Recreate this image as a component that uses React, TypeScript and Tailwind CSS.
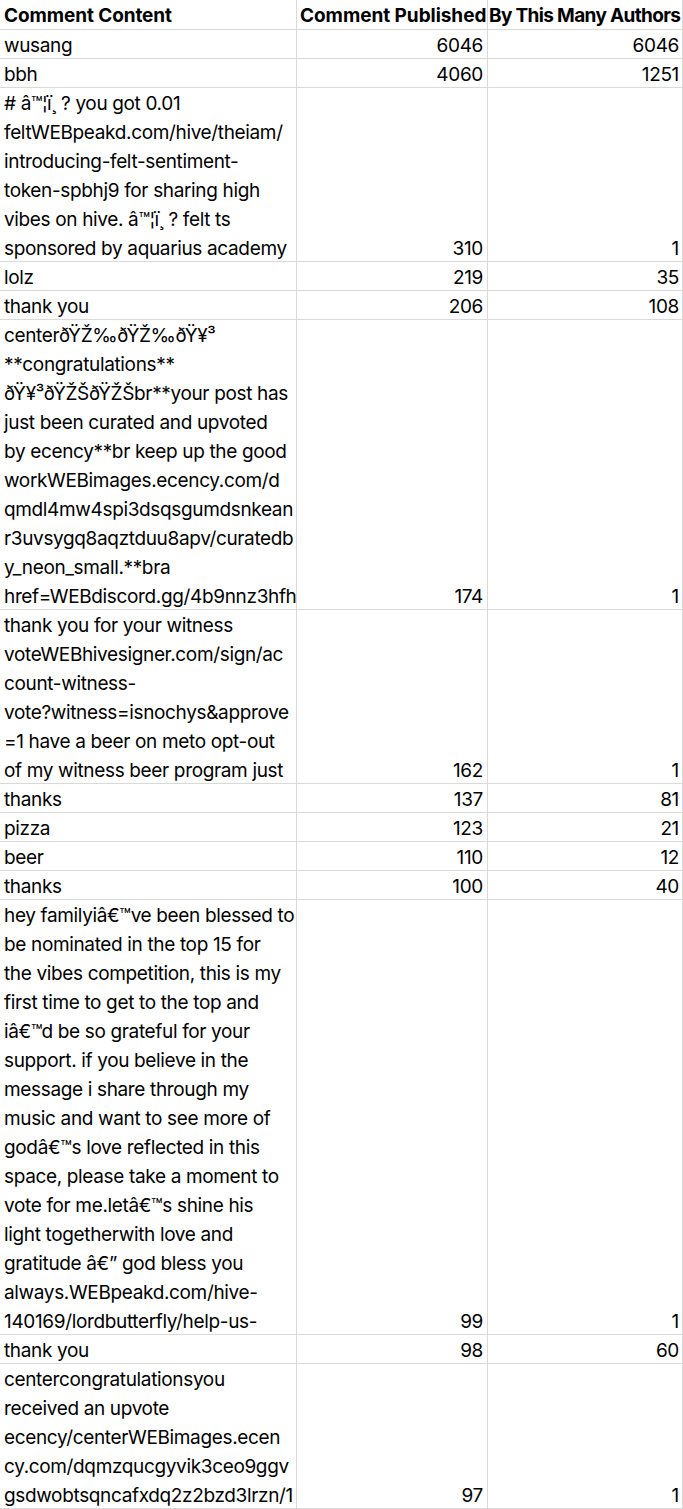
import React from "react";

type Row = { lines: string[]; a: string; b: string };

const rows: Row[] = [
  { lines: ["wusang"], a: "6046", b: "6046" },
  { lines: ["bbh"], a: "4060", b: "1251" },
  {
    lines: [
      "# â™¦ï¸ ? you got 0.01",
      "feltWEBpeakd.com/hive/theiam/",
      "introducing-felt-sentiment-",
      "token-spbhj9 for sharing high",
      "vibes on hive. â™¦ï¸ ? felt ts",
      "sponsored by aquarius academy",
    ],
    a: "310",
    b: "1",
  },
  { lines: ["lolz"], a: "219", b: "35" },
  { lines: ["thank you"], a: "206", b: "108" },
  {
    lines: [
      "centerðŸŽ‰ðŸŽ‰ðŸ¥³",
      "**congratulations**",
      "ðŸ¥³ðŸŽŠðŸŽŠbr**your post has",
      "just been curated and upvoted",
      "by ecency**br keep up the good",
      "workWEBimages.ecency.com/d",
      "qmdl4mw4spi3dsqsgumdsnkean",
      "r3uvsygq8aqztduu8apv/curatedb",
      "y_neon_small.**bra",
      "href=WEBdiscord.gg/4b9nnz3hfh",
    ],
    a: "174",
    b: "1",
  },
  {
    lines: [
      "thank you for your witness",
      "voteWEBhivesigner.com/sign/ac",
      "count-witness-",
      "vote?witness=isnochys&approve",
      "=1 have a beer on meto opt-out",
      "of my witness beer program just",
    ],
    a: "162",
    b: "1",
  },
  { lines: ["thanks"], a: "137", b: "81" },
  { lines: ["pizza"], a: "123", b: "21" },
  { lines: ["beer"], a: "110", b: "12" },
  { lines: ["thanks"], a: "100", b: "40" },
  {
    lines: [
      "hey familyiâ€™ve been blessed to",
      "be nominated in the top 15 for",
      "the vibes competition, this is my",
      "first time to get to the top and",
      "iâ€™d be so grateful for your",
      "support. if you believe in the",
      "message i share through my",
      "music and want to see more of",
      "godâ€™s love reflected in this",
      "space, please take a moment to",
      "vote for me.letâ€™s shine his",
      "light togetherwith love and",
      "gratitude â€” god bless you",
      "always.WEBpeakd.com/hive-",
      "140169/lordbutterfly/help-us-",
    ],
    a: "99",
    b: "1",
  },
  { lines: ["thank you"], a: "98", b: "60" },
  {
    lines: [
      "centercongratulationsyou",
      "received an upvote",
      "ecency/centerWEBimages.ecen",
      "cy.com/dqmzqucgyvik3ceo9ggv",
      "gsdwobtsqncafxdq2z2bzd3lrzn/1",
    ],
    a: "97",
    b: "1",
  },
];

const cell = "shadow-[inset_-1px_-1px_0_#d9d9d9]";

export default function App() {
  return (
    <div
      className="w-[683px] bg-white text-black text-[19px] leading-[29px] tracking-[-0.35px]"
      style={{ fontFamily: "Inter, 'Liberation Sans', sans-serif" }}
    >
      <div className="grid grid-cols-[297px_191px_195px]">
        <div className={`${cell} h-[30px] pt-px pl-[4px] font-bold tracking-[-0.1px] whitespace-nowrap`}>
          Comment Content
        </div>
        <div className={`${cell} h-[30px] pt-px pl-[3px] font-bold tracking-[-0.05px] whitespace-nowrap`}>
          Comment Published
        </div>
        <div className={`${cell} h-[30px] pt-px pl-[1px] font-bold tracking-[-0.65px] whitespace-nowrap`}>
          By This Many Authors
        </div>
        {rows.map((r, i) => (
          <React.Fragment key={i}>
            <div className={`${cell} pl-[4px]`}>
              {r.lines.map((l, j) => (
                <div key={j} className="h-[29px] pt-px whitespace-nowrap">
                  {l}
                </div>
              ))}
            </div>
            <div className={`${cell} flex items-end justify-end pr-[5px]`}>
              <div className="h-[29px] pt-px">{r.a}</div>
            </div>
            <div className={`${cell} flex items-end justify-end pr-[4px]`}>
              <div className="h-[29px] pt-px">{r.b}</div>
            </div>
          </React.Fragment>
        ))}
      </div>
    </div>
  );
}
